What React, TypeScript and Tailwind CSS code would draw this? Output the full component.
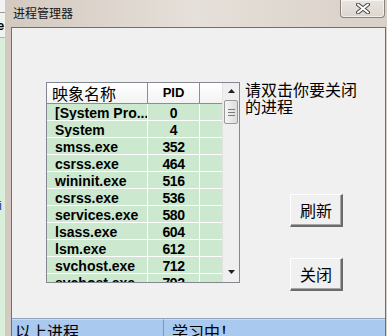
import React from "react";

interface Proc {
    name: string;
    pid: string;
}

const procs: Proc[] = [
    { name: "[System Pro...", pid: "0" },
    { name: "System", pid: "4" },
    { name: "smss.exe", pid: "352" },
    { name: "csrss.exe", pid: "464" },
    { name: "wininit.exe", pid: "516" },
    { name: "csrss.exe", pid: "536" },
    { name: "services.exe", pid: "580" },
    { name: "lsass.exe", pid: "604" },
    { name: "lsm.exe", pid: "612" },
    { name: "svchost.exe", pid: "712" },
    { name: "svchost.exe", pid: "792" },
];

const cjk = "font-['Noto_Sans_CJK_SC',sans-serif]";

const CloseGlyph: React.FC = () => (
    <svg width="14" height="11" viewBox="0 0 14 11">
        <path d="M2 1.5 L12 9.5 M12 1.5 L2 9.5" stroke="#4b4b4b" strokeWidth="4" strokeLinecap="round" />
        <path d="M2 1.5 L12 9.5 M12 1.5 L2 9.5" stroke="#ffffff" strokeWidth="2" strokeLinecap="round" />
    </svg>
);

const Arrow: React.FC<{ up?: boolean }> = ({ up }) => (
    <svg width="7" height="4" viewBox="0 0 7 4">
        {up ? <path d="M0 4 L3.5 0 L7 4 Z" fill="#202020" /> : <path d="M0 0 L7 0 L3.5 4 Z" fill="#202020" />}
    </svg>
);

const ProcList: React.FC = () => (
    <div className="w-[194px] h-[201px] flex border border-[#828790] bg-white overflow-hidden">
        <div className="flex-1 flex flex-col overflow-hidden">
            {/* header */}
            <div className="h-[21px] flex shrink-0 bg-linear-to-b from-white to-[#f2f2f2]">
                <div className={`w-[101px] border-r border-b border-[#8e8e8e] pl-[5px] text-[16px] leading-[20px] text-black ${cjk}`}>
                    映象名称
                </div>
                <div className="w-[52px] border-r border-b border-[#8e8e8e] text-center text-[13px] leading-[20px] font-bold text-black font-['Liberation_Sans',sans-serif]">
                    PID
                </div>
                <div className="flex-1 border-b border-[#8e8e8e]" />
            </div>
            {procs.map((p, i) => (
                <div key={i} className="h-[17px] flex shrink-0 bg-[#cce8cf] border-b border-white font-['Liberation_Sans',sans-serif] font-bold text-black">
                    <div className="w-[101px] border-r border-white pl-[8px] pt-px text-[14px] leading-[16px] whitespace-nowrap overflow-hidden">
                        {p.name}
                    </div>
                    <div className="w-[52px] border-r border-white pt-px text-center text-[14px] leading-[16px] tracking-[-0.5px]">
                        {p.pid}
                    </div>
                    <div className="flex-1" />
                </div>
            ))}
        </div>
        {/* scrollbar */}
        <div className="w-[17px] flex flex-col bg-[#efefef] border-l border-[#e2e2e2]">
            <div className="h-[17px] flex items-center justify-center pb-[2px]">
                <Arrow up />
            </div>
            <div className="h-[24px] mx-[1px] rounded-[2px] border border-[#9a9a9a] bg-linear-to-r from-[#f6f6f6] to-[#dcdcdc] flex flex-col items-center justify-center gap-[2px]">
                <div className="w-[7px] h-px bg-[#7a7a7a]" />
                <div className="w-[7px] h-px bg-[#7a7a7a]" />
                <div className="w-[7px] h-px bg-[#7a7a7a]" />
            </div>
            <div className="flex-1" />
            <div className="h-[17px] flex items-start justify-center pt-[5px]">
                <Arrow />
            </div>
        </div>
    </div>
);

const WinButton: React.FC<{ label: string }> = ({ label }) => (
    <div
        className={`w-[53px] h-[33px] flex items-center justify-center bg-[#f0f0f0] border-t border-l border-r-2 border-b-2 border-t-white border-l-white border-r-[#6b6b6b] border-b-[#6b6b6b] shadow-[inset_-1px_-1px_0_#a8a8a8] text-[16px] text-black ${cjk}`}
    >
        {label}
    </div>
);

export default function App() {
    return (
        <div className="w-[387px] h-[336px] flex overflow-hidden bg-[#d8cfc6]">
            {/* background window sliver */}
            <div className="w-[5px] flex flex-col overflow-hidden">
                <div className="h-[13px] bg-[#f2f2f2] border-b border-[#9a9a9a]" />
                <div className="h-[25px] bg-[#eef4ee] border-b border-[#b0b0b0] text-[13px] font-bold leading-[25px] -ml-[3px] font-['Liberation_Sans',sans-serif]">
                    e
                </div>
                <div className="flex-1 bg-[#d9eedb]">
                    <div className="mt-[158px] -ml-[1px] text-[13px] text-[#1d3fb8] font-['Liberation_Sans',sans-serif]">i</div>
                </div>
            </div>

            {/* window */}
            <div className="flex-1 flex flex-col bg-linear-to-r from-[#d3c9bf] via-[#e6e0da] to-[#d9d0c7]">
                {/* title bar */}
                <div className="h-[27px] flex items-start shrink-0">
                    <div className={`pl-[8px] pt-[5px] text-[12px] leading-[16px] text-[#141414] ${cjk}`}>进程管理器</div>
                    <div className="ml-auto mr-[2px] w-[45px] h-[18px] rounded-b-[4px] border border-t-0 border-[#8a837d] bg-linear-to-b from-[#e9e4df] to-[#ddd6cf] shadow-[inset_0_0_0_1px_rgba(255,255,255,0.6)] flex items-center justify-center">
                        <CloseGlyph />
                    </div>
                </div>

                {/* client */}
                <div className="flex-1 flex pl-[6px] pr-px">
                    <div className="flex-1 flex flex-col bg-[#f0f0f0] border-l border-t border-r border-[#6f6f6f]">
                        <div className="h-[290px] flex pl-[34px] pt-[54px]">
                            <ProcList />
                            <div className="ml-[5px] flex flex-col">
                                <div className={`-mt-[1px] text-[16px] leading-[17px] text-black ${cjk}`}>
                                    <div className="h-[17px]">请双击你要关闭</div>
                                    <div className="h-[17px]">的进程</div>
                                </div>
                                <div className="ml-[45px] mt-[79px]">
                                    <WinButton label="刷新" />
                                </div>
                                <div className="ml-[45px] mt-[31px]">
                                    <WinButton label="关闭" />
                                </div>
                            </div>
                        </div>

                        {/* status bar */}
                        <div className={`flex-1 flex border-t border-[#8fa3c0] bg-[#a9c9ef] overflow-hidden text-[16px] leading-[20px] text-black ${cjk}`}>
                            <div className="w-[151px] pl-[3px] pt-[1px] border-t border-[#c9dcf4]">以上进程</div>
                            <div className="flex-1 pl-[8px] pt-[1px] border-l border-t border-l-[#7f96b8] border-t-[#c9dcf4]">学习中！</div>
                        </div>
                    </div>
                </div>
            </div>
        </div>
    );
}
